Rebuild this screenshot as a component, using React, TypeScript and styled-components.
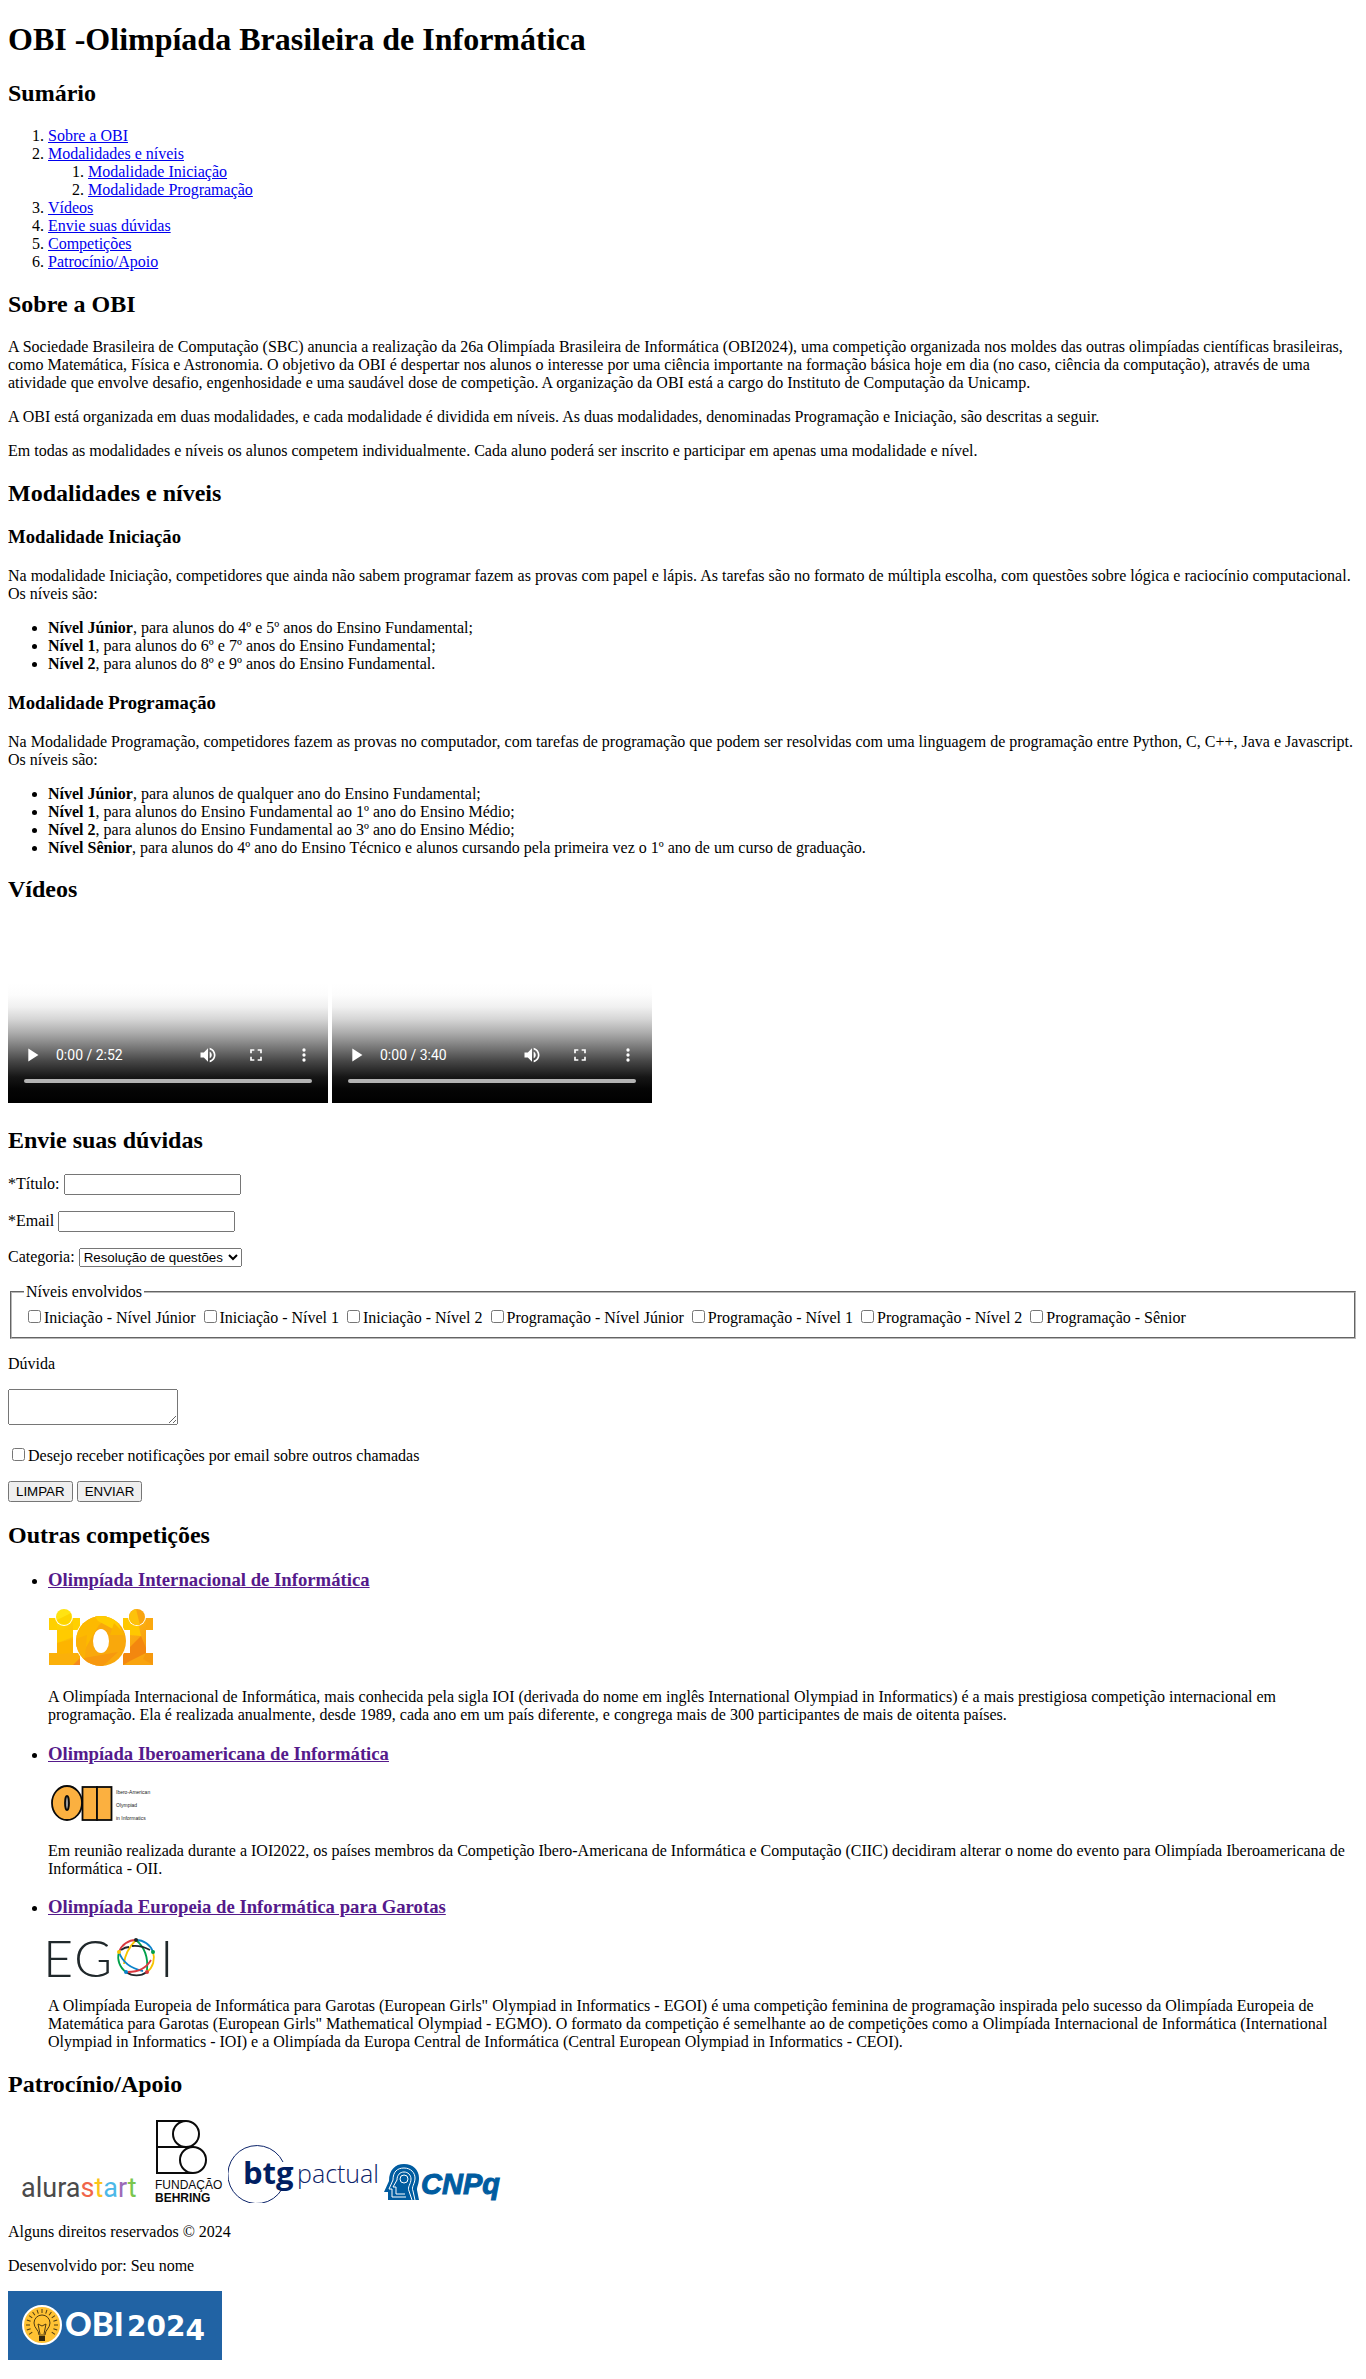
import React from "react";
import styled, { createGlobalStyle } from "styled-components";

const GlobalStyle = createGlobalStyle`
  body {
    margin: 0 8px;
    background: #fff;
    color: #000;
    font-family: "Liberation Serif", "Times New Roman", serif;
    font-size: 16px;
  }
`;

const Page = styled.div`
  line-height: normal;
`;

const PageTitle = styled.h1`
  font-size: 32px;
`;

const SectionTitle = styled.h2`
  font-size: 24px;
`;

const SubTitle = styled.h3``;

const Text = styled.p`
  margin: 16px 0;
`;

const Link = styled.a<{ $visited?: boolean }>`
  color: ${(p) => (p.$visited ? "#551a8b" : "#0000ee")};
  text-decoration: underline;
`;

const NumberedList = styled.ol`
  padding-left: 40px;
`;

const BulletList = styled.ul`
  padding-left: 40px;
`;

const VideoRow = styled.div`
  display: flex;
  flex-wrap: wrap;
  gap: 4px;
  padding-bottom: 4px;
`;

const Player = styled.div`
  display: flex;
  flex-direction: column;
  justify-content: flex-end;
  box-sizing: border-box;
  width: 320px;
  height: 180px;
  background: linear-gradient(
    to top,
    #000 0,
    #050505 14px,
    #161616 26px,
    #474747 42px,
    #7a7a7a 56px,
    #acacac 70px,
    #d6d6d6 84px,
    #f0f0f0 96px,
    #fcfcfc 108px,
    #fff 120px
  );
`;

const Controls = styled.div`
  display: flex;
  align-items: center;
  height: 48px;
`;

const PlayerButton = styled.button`
  display: flex;
  align-items: center;
  justify-content: center;
  width: 48px;
  height: 48px;
  padding: 0;
  border: 0;
  background: none;
  color: #fff;
`;

const Time = styled.span`
  flex: 1;
  color: #fff;
  font-family: Roboto, "Liberation Sans", sans-serif;
  font-size: 14px;
`;

const Track = styled.div`
  height: 4px;
  margin: 0 16px 20px;
  border-radius: 2px;
  background: #b3b3b3;
`;

const TextField = styled.input`
  box-sizing: border-box;
  width: 177px;
  height: 21px;
  font-family: "Liberation Sans", Arial, sans-serif;
`;

const Dropdown = styled.select`
  box-sizing: border-box;
  width: 163px;
  height: 19px;
  font-family: "Liberation Sans", Arial, sans-serif;
`;

const Levels = styled.fieldset`
  border: 2px groove #b8b8b8;
`;

const TextArea = styled.textarea`
  box-sizing: border-box;
  width: 170px;
  height: 36px;
`;

const Button = styled.button`
  box-sizing: border-box;
  height: 21px;
  font-family: "Liberation Sans", Arial, sans-serif;
`;

const LogoBlock = styled.div`
  padding-bottom: 4px;

  svg {
    display: block;
  }
`;

const Sponsors = styled.div`
  display: flex;
  flex-wrap: wrap;
  align-items: flex-end;
  gap: 4px;
  padding-bottom: 4px;
`;

const Footer = styled.footer`
  padding-bottom: 16px;
`;

const SANS = '"Liberation Sans", Arial, sans-serif';

function VideoPlayer({ duration }: { duration: string }) {
  return (
    <Player>
      <Controls>
        <PlayerButton type="button" aria-label="Reproduzir">
          <svg width="22" height="22" viewBox="0 0 24 24" fill="currentColor">
            <path d="M8 5v14l11-7z" />
          </svg>
        </PlayerButton>
        <Time>0:00 / {duration}</Time>
        <PlayerButton type="button" aria-label="Volume">
          <svg width="20" height="20" viewBox="0 0 24 24" fill="currentColor">
            <path d="M3 9v6h4l5 5V4L7 9H3zm13.500 3c0-1.770-1.020-3.290-2.500-4.030v8.050c1.480-.73 2.500-2.250 2.500-4.020zM14 3.230v2.060c2.890.86 5 3.540 5 6.710s-2.110 5.850-5 6.710v2.060c4.010-.91 7-4.490 7-8.770s-2.990-7.860-7-8.770z" />
          </svg>
        </PlayerButton>
        <PlayerButton type="button" aria-label="Tela cheia">
          <svg width="20" height="20" viewBox="0 0 24 24" fill="currentColor">
            <path d="M7 14H5v5h5v-2H7v-3zm-2-4h2V7h3V5H5v5zm12 7h-3v2h5v-5h-2v3zM14 5v2h3v3h2V5h-5z" />
          </svg>
        </PlayerButton>
        <PlayerButton type="button" aria-label="Mais opções">
          <svg width="20" height="20" viewBox="0 0 24 24" fill="currentColor">
            <circle cx="12" cy="6" r="2" />
            <circle cx="12" cy="12" r="2" />
            <circle cx="12" cy="18" r="2" />
          </svg>
        </PlayerButton>
      </Controls>
      <Track />
    </Player>
  );
}

function IoiLogo() {
  return (
    <svg width="106" height="59" viewBox="0 0 106 59" role="img" aria-label="IOI">
      <defs>
        <linearGradient id="ioiLeft" x1="0" y1="0" x2="0.3" y2="1">
          <stop offset="0" stopColor="#ffdd00" />
          <stop offset="1" stopColor="#f9a80c" />
        </linearGradient>
        <linearGradient id="ioiRight" x1="0" y1="0" x2="0.3" y2="1">
          <stop offset="0" stopColor="#fdb913" />
          <stop offset="1" stopColor="#f7960f" />
        </linearGradient>
        <clipPath id="ioiO">
          <ellipse cx="53" cy="32" rx="25" ry="25" />
        </clipPath>
      </defs>
      <g fill="url(#ioiLeft)">
        <rect x="1" y="9" width="31" height="12" fill="#ffd000" />
        <rect x="9" y="9" width="16" height="47" />
        <rect x="1" y="44" width="31" height="12" fill="#fbb00a" />
      </g>
      <path d="M9 34l16-6v-7H9z" fill="#ffcb00" />
      <path d="M9 34l16-4v14l-16 1z" fill="#fdb400" />
      <path d="M25 56l7-7v7z" fill="#f58a1f" />
      <rect x="75" y="9" width="30" height="12" fill="#fba80f" />
      <rect x="82" y="9" width="16" height="47" fill="url(#ioiRight)" />
      <rect x="75" y="44" width="30" height="12" fill="#f9a40f" />
      <path d="M75 9h14l4 18-11-1v-5h-7z" fill="#ffc800" />
      <path d="M82 38l11-11 5 12v5l-16 8-7 4v-12h7z" fill="#f3870f" />
      <path d="M98 44h7v12l-10-6z" fill="#f6990e" />
      <ellipse cx="53" cy="32" rx="26" ry="26" fill="#fff" />
      <g clipPath="url(#ioiO)">
        <rect x="27" y="6" width="52" height="52" fill="#f9a80c" />
        <path d="M27 6h36l-12 10-14 24-10-2z" fill="#fdb900" />
        <path d="M46 6h20l10 20-26-14z" fill="#ffcc00" />
        <path d="M66 14l12 12H62z" fill="#fbb400" />
        <path d="M27 30l12-4-3 32H27z" fill="#fbb006" />
        <path d="M38 58l-2-9 34-6-16 15z" fill="#f7980f" />
      </g>
      <ellipse cx="53" cy="32" rx="8" ry="12" fill="#fff" />
      <circle cx="16" cy="8" r="9" fill="#fff" />
      <circle cx="16" cy="8" r="8" fill="#ffe312" />
      <path d="M9 11l14-7c1 5 0 9-4 11-4 1-8 0-10-4z" fill="#fdd400" />
      <circle cx="89" cy="8" r="9" fill="#fff" />
      <circle cx="89" cy="8" r="8" fill="#f9a40f" />
      <path d="M88 0l4 16c-6 1-11-3-11-8 0-4 3-7 7-8z" fill="#fdc20a" />
    </svg>
  );
}

function OiiLogo() {
  return (
    <svg width="106" height="38" viewBox="0 0 106 38" role="img" aria-label="OII">
      <g fill="#fbb040" stroke="#0a0a0a" strokeWidth="1.800">
        <ellipse cx="19" cy="19" rx="15" ry="17" />
        <rect x="34.500" y="3" width="14.500" height="33" />
        <rect x="49" y="3" width="14.500" height="33" />
        <ellipse cx="19" cy="19" rx="2" ry="7" fill="#999" />
      </g>
      <g fontFamily={SANS} fontSize="5" fill="#222">
        <text x="68" y="10">Ibero-American</text>
        <text x="68" y="23">Olympiad</text>
        <text x="68" y="36">in Informatics</text>
      </g>
    </svg>
  );
}

function EgoiLogo() {
  return (
    <svg width="122" height="40" viewBox="0 0 122 40" role="img" aria-label="EGOI">
      <g fontFamily='Lato, "Open Sans", sans-serif' fontSize="52" fontWeight="300" fill="#20282b">
        <text x="-5" y="40">E</text>
        <text x="26" y="40">G</text>
        <text x="112" y="40">I</text>
      </g>
      <g fill="none" strokeWidth="1.800">
        <path d="M88 3a18 18 0 0 1 17 12" stroke="#0b83cb" />
        <path d="M105 15a18 18 0 0 1-6 20" stroke="#f6c400" />
        <path d="M99 35a18 18 0 0 1-21 0" stroke="#20282b" />
        <path d="M78 35a18 18 0 0 1-7-20" stroke="#00a04a" />
        <path d="M71 15a18 18 0 0 1 17-12" stroke="#d9383f" />
        <path d="M88 3q-11 11-12 24" stroke="#f6c400" />
        <path d="M88 3q13 11 11 30" stroke="#00a04a" />
        <path d="M73 13q4-3 8-3m3-1q9-1 18 4" stroke="#20282b" />
        <path d="M71 15q5 15 24 19" stroke="#0b83cb" />
        <path d="M80 35q16 0 23-12" stroke="#d9383f" />
      </g>
      <circle cx="88" cy="3" r="2" fill="#20282b" />
      <circle cx="105" cy="15" r="2" fill="#00a04a" />
      <circle cx="99" cy="35" r="2" fill="#d9383f" />
      <circle cx="78" cy="35" r="2" fill="#0b83cb" />
      <circle cx="71" cy="15" r="2" fill="#f6c400" />
    </svg>
  );
}

function AluraLogo() {
  return (
    <svg width="140" height="40" viewBox="0 0 140 40" role="img" aria-label="Alura Start">
      <text x="13" y="34" fontFamily='Roboto, "Liberation Sans", sans-serif' fontSize="27">
        <tspan fill="#4a4a4a">alura</tspan>
        <tspan fill="#f0654a">s</tspan>
        <tspan fill="#fcc419">t</tspan>
        <tspan fill="#4cb8e8">a</tspan>
        <tspan fill="#9b6bb8">r</tspan>
        <tspan fill="#7ac64f">t</tspan>
      </text>
    </svg>
  );
}

function BehringLogo() {
  return (
    <svg width="72" height="85" viewBox="0 0 72 85" role="img" aria-label="Fundação Behring">
      <g fill="none" stroke="#0a0a0a" strokeWidth="2">
        <path d="M34 3H5v52h36M5 29h36" />
        <circle cx="34" cy="16" r="13" />
        <circle cx="41" cy="42" r="13" />
      </g>
      <g fontFamily={SANS} fontSize="12" fill="#0a0a0a">
        <text x="3" y="71">FUNDAÇÃO</text>
        <text x="3" y="84" fontWeight="700">
          BEHRING
        </text>
      </g>
    </svg>
  );
}

function BtgLogo() {
  return (
    <svg width="152" height="60" viewBox="0 0 152 60" role="img" aria-label="BTG Pactual">
      <path d="M55 19A29 29 0 1 0 54 46" fill="none" stroke="#0a2268" strokeWidth="1" />
      <text x="15" y="41" fontFamily='"Open Sans", sans-serif' fontSize="31" fontWeight="700" fill="#001e62">
        btg
      </text>
      <text x="69" y="40" fontFamily='"Open Sans", sans-serif' fontSize="25" fontWeight="300" fill="#0a2268">
        pactual
      </text>
    </svg>
  );
}

function CnpqLogo() {
  return (
    <svg width="120" height="40" viewBox="0 0 120 40" role="img" aria-label="CNPq">
      <path
        d="M4 37v-8H0l5-11C5 7 11 1 20 1s15 6 15 14c0 6-2 8-2 12l2 10z"
        fill="#005ca0"
      />
      <g fill="none" stroke="#fff" strokeWidth="1">
        <path d="M8 34v-8H5l4-9c0-8 4-12 11-12s11 5 11 10c0 6-4 9-2 13l2 9" />
        <path d="M12 31v-7H9l4-7c0-5 3-8 7-8s7 3 7 7c0 5-4 8-2 12l3 9M12 31h9M8 34h14" />
      </g>
      <circle cx="20" cy="16" r="4" fill="#005ca0" stroke="#fff" strokeWidth="1" />
      <text
        x="37"
        y="31"
        fontFamily={SANS}
        fontSize="29"
        fontWeight="700"
        fontStyle="italic"
        fill="#005ca0"
        stroke="#005ca0"
        strokeWidth="1"
      >
        CNPq
      </text>
    </svg>
  );
}

function ObiLogo() {
  const rays = Array.from({ length: 15 }, (_, i) => -126 + i * 18);
  return (
    <svg width="214" height="69" viewBox="0 0 214 69" role="img" aria-label="OBI 2024">
      <rect width="214" height="69" fill="#2163a4" />
      <circle cx="34" cy="34" r="19" fill="#ffc233" stroke="#fff" strokeWidth="2" />
      <g stroke="#4d3a12" strokeWidth="1">
        {rays.map((angle) => (
          <path key={angle} d="M34 18v4" transform={`rotate(${angle} 34 34)`} />
        ))}
      </g>
      <path
        d="M31 44c0-5-5-7-5-12a8 8 0 0 1 16 0c0 5-5 7-5 12zM32 43l-2-10 4 2 4-2-2 10"
        fill="none"
        stroke="#4d3a12"
        strokeWidth="1"
      />
      <rect x="31" y="45" width="6" height="5" fill="#33270c" />
      <text x="57" y="45" fontSize="33" fontFamily='Lato, "Open Sans", sans-serif' fontWeight="900" fill="#fff">
        OBI
      </text>
      <text x="119" y="45" fontSize="28" fontFamily='"DejaVu Sans", sans-serif' fontWeight="700" fill="#fff">
        202<tspan dy="4">4</tspan>
      </text>
    </svg>
  );
}

const levels = [
  "Iniciação - Nível Júnior",
  "Iniciação - Nível 1",
  "Iniciação - Nível 2",
  "Programação - Nível Júnior",
  "Programação - Nível 1",
  "Programação - Nível 2",
  "Programação - Sênior",
];

export default function App() {
  return (
    <Page>
      <GlobalStyle />
      <header>
        <PageTitle>OBI -Olimpíada Brasileira de Informática</PageTitle>
      </header>

      <nav>
        <SectionTitle>Sumário</SectionTitle>
        <NumberedList>
          <li><Link href="#sobre">Sobre a OBI</Link></li>
          <li>
            <Link href="#modalidades">Modalidades e níveis</Link>
            <NumberedList>
              <li><Link href="#iniciacao">Modalidade Iniciação</Link></li>
              <li><Link href="#programacao">Modalidade Programação</Link></li>
            </NumberedList>
          </li>
          <li><Link href="#videos">Vídeos</Link></li>
          <li><Link href="#duvidas">Envie suas dúvidas</Link></li>
          <li><Link href="#competicoes">Competições</Link></li>
          <li><Link href="#apoio">Patrocínio/Apoio</Link></li>
        </NumberedList>
      </nav>

      <main>
        <section id="sobre">
          <SectionTitle>Sobre a OBI</SectionTitle>
          <Text>
            A Sociedade Brasileira de Computação (SBC) anuncia a realização da 26a Olimpíada Brasileira de
            Informática (OBI2024), uma competição organizada nos moldes das outras olimpíadas científicas
            brasileiras, como Matemática, Física e Astronomia. O objetivo da OBI é despertar nos alunos o
            interesse por uma ciência importante na formação básica hoje em dia (no caso, ciência da
            computação), através de uma atividade que envolve desafio, engenhosidade e uma saudável dose de
            competição. A organização da OBI está a cargo do Instituto de Computação da Unicamp.
          </Text>
          <Text>
            A OBI está organizada em duas modalidades, e cada modalidade é dividida em níveis. As duas
            modalidades, denominadas Programação e Iniciação, são descritas a seguir.
          </Text>
          <Text>
            Em todas as modalidades e níveis os alunos competem individualmente. Cada aluno poderá ser
            inscrito e participar em apenas uma modalidade e nível.
          </Text>
        </section>

        <section id="modalidades">
          <SectionTitle>Modalidades e níveis</SectionTitle>
          <SubTitle id="iniciacao">Modalidade Iniciação</SubTitle>
          <Text>
            Na modalidade Iniciação, competidores que ainda não sabem programar fazem as provas com papel e
            lápis. As tarefas são no formato de múltipla escolha, com questões sobre lógica e raciocínio
            computacional. Os níveis são:
          </Text>
          <BulletList>
            <li><strong>Nível Júnior</strong>, para alunos do 4º e 5º anos do Ensino Fundamental;</li>
            <li><strong>Nível 1</strong>, para alunos do 6º e 7º anos do Ensino Fundamental;</li>
            <li><strong>Nível 2</strong>, para alunos do 8º e 9º anos do Ensino Fundamental.</li>
          </BulletList>
          <SubTitle id="programacao">Modalidade Programação</SubTitle>
          <Text>
            Na Modalidade Programação, competidores fazem as provas no computador, com tarefas de programação
            que podem ser resolvidas com uma linguagem de programação entre Python, C, C++, Java e
            Javascript. Os níveis são:
          </Text>
          <BulletList>
            <li><strong>Nível Júnior</strong>, para alunos de qualquer ano do Ensino Fundamental;</li>
            <li><strong>Nível 1</strong>, para alunos do Ensino Fundamental ao 1º ano do Ensino Médio;</li>
            <li><strong>Nível 2</strong>, para alunos do Ensino Fundamental ao 3º ano do Ensino Médio;</li>
            <li>
              <strong>Nível Sênior</strong>, para alunos do 4º ano do Ensino Técnico e alunos cursando pela
              primeira vez o 1º ano de um curso de graduação.
            </li>
          </BulletList>
        </section>

        <section id="videos">
          <SectionTitle>Vídeos</SectionTitle>
          <VideoRow>
            <VideoPlayer duration="2:52" />
            <VideoPlayer duration="3:40" />
          </VideoRow>
        </section>

        <section id="duvidas">
          <SectionTitle>Envie suas dúvidas</SectionTitle>
          <form onSubmit={(e) => e.preventDefault()}>
            <Text>
              <label htmlFor="titulo">*Título:</label> <TextField id="titulo" type="text" />
            </Text>
            <Text>
              <label htmlFor="email">*Email</label> <TextField id="email" type="email" />
            </Text>
            <Text>
              <label htmlFor="categoria">Categoria:</label>{" "}
              <Dropdown id="categoria">
                <option>Resolução de questões</option>
              </Dropdown>
            </Text>
            <Levels>
              <legend>Níveis envolvidos</legend>
              {levels.map((level, i) => (
                <React.Fragment key={level}>
                  <input type="checkbox" id={`nivel-${i}`} />
                  <label htmlFor={`nivel-${i}`}>{level}</label>{" "}
                </React.Fragment>
              ))}
            </Levels>
            <Text>
              <label htmlFor="duvida">Dúvida</label>
            </Text>
            <TextArea id="duvida" />
            <Text>
              <input type="checkbox" id="notificar" />
              <label htmlFor="notificar">Desejo receber notificações por email sobre outros chamadas</label>
            </Text>
            <Button type="reset">LIMPAR</Button> <Button type="submit">ENVIAR</Button>
          </form>
        </section>

        <section id="competicoes">
          <SectionTitle>Outras competições</SectionTitle>
          <BulletList>
            <li>
              <SubTitle><Link $visited href="#ioi">Olimpíada Internacional de Informática</Link></SubTitle>
              <LogoBlock><IoiLogo /></LogoBlock>
              <Text>
                A Olimpíada Internacional de Informática, mais conhecida pela sigla IOI (derivada do nome em
                inglês International Olympiad in Informatics) é a mais prestigiosa competição internacional
                em programação. Ela é realizada anualmente, desde 1989, cada ano em um país diferente, e
                congrega mais de 300 participantes de mais de oitenta países.
              </Text>
            </li>
            <li>
              <SubTitle><Link $visited href="#oii">Olimpíada Iberoamericana de Informática</Link></SubTitle>
              <LogoBlock><OiiLogo /></LogoBlock>
              <Text>
                Em reunião realizada durante a IOI2022, os países membros da Competição Ibero-Americana de
                Informática e Computação (CIIC) decidiram alterar o nome do evento para Olimpíada
                Iberoamericana de Informática - OII.
              </Text>
            </li>
            <li>
              <SubTitle>
                <Link $visited href="#egoi">Olimpíada Europeia de Informática para Garotas</Link>
              </SubTitle>
              <LogoBlock><EgoiLogo /></LogoBlock>
              <Text>
                A Olimpíada Europeia de Informática para Garotas (European Girls" Olympiad in Informatics -
                EGOI) é uma competição feminina de programação inspirada pelo sucesso da Olimpíada Europeia
                de Matemática para Garotas (European Girls" Mathematical Olympiad - EGMO). O formato da
                competição é semelhante ao de competições como a Olimpíada Internacional de Informática
                (International Olympiad in Informatics - IOI) e a Olimpíada da Europa Central de Informática
                (Central European Olympiad in Informatics - CEOI).
              </Text>
            </li>
          </BulletList>
        </section>

        <section id="apoio">
          <SectionTitle>Patrocínio/Apoio</SectionTitle>
          <Sponsors>
            <AluraLogo />
            <BehringLogo />
            <BtgLogo />
            <CnpqLogo />
          </Sponsors>
        </section>
      </main>

      <Footer>
        <Text>Alguns direitos reservados © 2024</Text>
        <Text>Desenvolvido por: Seu nome</Text>
        <LogoBlock><ObiLogo /></LogoBlock>
      </Footer>
    </Page>
  );
}
